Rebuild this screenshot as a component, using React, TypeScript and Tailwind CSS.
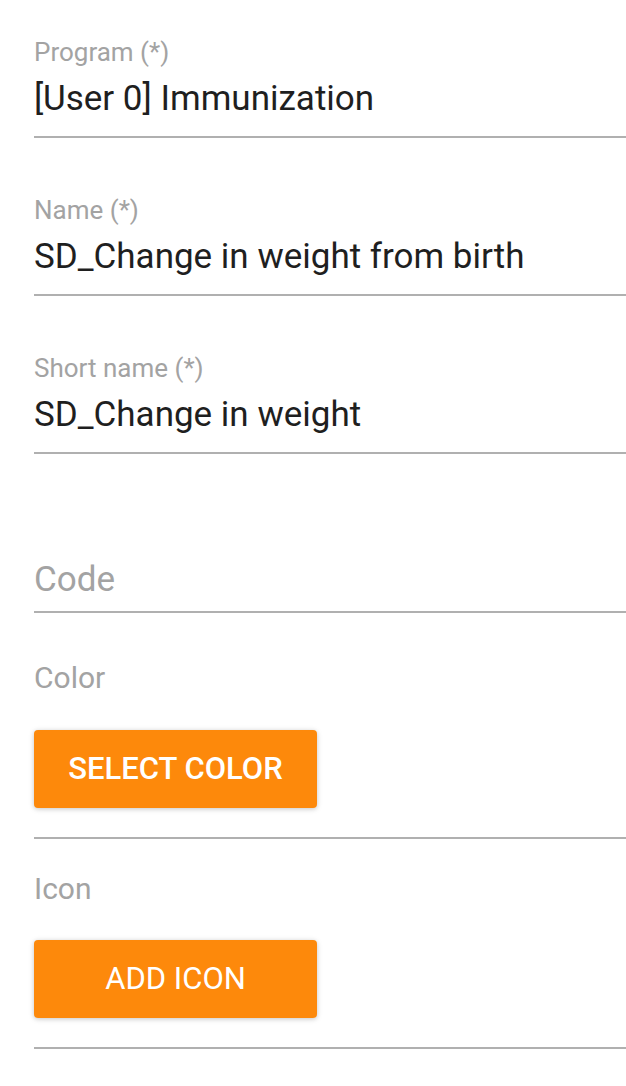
import React from "react";

type FieldProps = {
  label: string;
  value: string;
  top: string;
};

const Field = ({ label, value, top }: FieldProps) => {
  return (
    <div className={top}>
      <div className="h-[26px] text-[26px] leading-[26px] text-[#a3a3a3]">{label}</div>
      <div className="mt-[16px] h-[35px] text-[35px] leading-[35px] text-[#1f1f1f] whitespace-nowrap">
        {value}
      </div>
      <div className="mt-[20px] h-[2px] bg-[#b0b0b0]" />
    </div>
  );
};

const App = () => {
  return (
    <div className="w-[626px] h-[1086px] bg-white pl-[34px] font-['Roboto',sans-serif] overflow-hidden">
      {/* text fields */}
      <Field top="pt-[39px]" label="Program (*)" value="[User 0] Immunization" />
      <Field top="pt-[59px]" label="Name (*)" value="SD_Change in weight from birth" />
      <Field top="pt-[59px]" label="Short name (*)" value="SD_Change in weight" />

      {/* empty code field */}
      <div className="pt-[108px]">
        <div className="h-[35px] text-[35px] leading-[35px] text-[#a3a3a3]">Code</div>
        <div className="mt-[14px] h-[2px] bg-[#b0b0b0]" />
      </div>

      {/* color picker */}
      <div className="pt-[50px]">
        <div className="h-[30px] text-[30px] leading-[30px] text-[#a3a3a3]">Color</div>
        <button className="mt-[37px] w-[283px] h-[78px] rounded-[4px] bg-[#fd890b] text-white text-[31px] font-medium uppercase shadow-[0_1px_6px_rgba(0,0,0,0.12),0_1px_4px_rgba(0,0,0,0.12)] flex items-center justify-center">
          Select color
        </button>
        <div className="mt-[29px] h-[2px] bg-[#b0b0b0]" />
      </div>

      {/* icon picker */}
      <div className="pt-[35px]">
        <div className="h-[30px] text-[30px] leading-[30px] text-[#a3a3a3]">Icon</div>
        <button className="mt-[36px] w-[283px] h-[78px] rounded-[4px] bg-[#fd890b] text-white text-[31px] uppercase shadow-[0_1px_6px_rgba(0,0,0,0.12),0_1px_4px_rgba(0,0,0,0.12)] flex items-center justify-center">
          Add icon
        </button>
        <div className="mt-[29px] h-[2px] bg-[#b0b0b0]" />
      </div>
    </div>
  );
};

export default App;
